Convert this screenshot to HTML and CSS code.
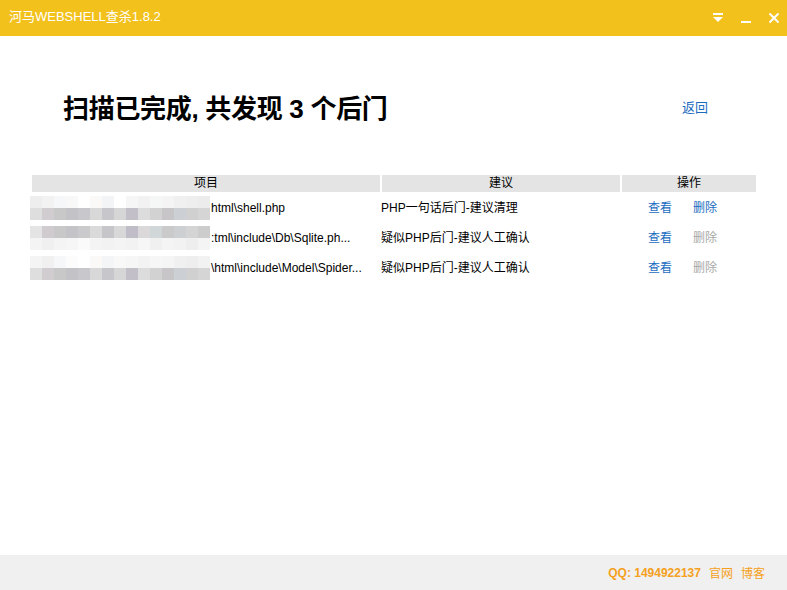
FILE: index.html
```html
<!DOCTYPE html>
<html lang="zh">
<head>
<meta charset="utf-8">
<title>河马WEBSHELL查杀1.8.2</title>
<link rel="stylesheet" href="styles.css">
</head>
<body>
<div class="app">
  <header class="titlebar">
    <span class="app-title">河马WEBSHELL查杀1.8.2</span>
    <div class="win-controls">
      <svg class="ctl" width="12" height="12" viewBox="0 0 12 12"><rect x="1" y="1" width="10" height="2" fill="#fff"/><polygon points="1,5 11,5 6,10" fill="#fff"/></svg>
      <svg class="ctl" width="12" height="12" viewBox="0 0 12 12"><rect x="1" y="9" width="10" height="2" fill="#fff"/></svg>
      <svg class="ctl" width="12" height="12" viewBox="0 0 12 12"><path d="M1.5 1.5 L10.5 10.5 M10.5 1.5 L1.5 10.5" stroke="#fff" stroke-width="2"/></svg>
    </div>
  </header>

  <main class="content">
    <div class="summary">
      <h1 class="headline">扫描已完成, 共发现 3 个后门</h1>
      <a class="back-link">返回</a>
    </div>

    <div class="result-table">
      <div class="thead">
        <div class="th col-item">项目</div>
        <div class="th col-advice">建议</div>
        <div class="th col-ops">操作</div>
      </div>

      <div class="tr">
        <div class="td col-item">
          <div class="mosaic">
            <i style="background:#eeeeee"></i><i style="background:#f2f2f2"></i><i style="background:#f6f7f8"></i><i style="background:#f8f8f8"></i><i style="background:#ffffff"></i><i style="background:#faf9f8"></i><i style="background:#f3f4f5"></i><i style="background:#ffffff"></i><i style="background:#f6f6f6"></i><i style="background:#f2f2f2"></i><i style="background:#f5f6f6"></i><i style="background:#f4f4f4"></i><i style="background:#f0f0f0"></i><i style="background:#eeeeee"></i><i style="background:#ececec"></i>
            <i style="background:#dedede"></i><i style="background:#d0ccd0"></i><i style="background:#c8c8c8"></i><i style="background:#c3c3c7"></i><i style="background:#c8c8cc"></i><i style="background:#d8d8d8"></i><i style="background:#c7c7cb"></i><i style="background:#d6d6d6"></i><i style="background:#c2bfc8"></i><i style="background:#dcdcdc"></i><i style="background:#d2d2d2"></i><i style="background:#c8c5c8"></i><i style="background:#ccd0d4"></i><i style="background:#d0d0d0"></i><i style="background:#d5d5d5"></i>
          </div>
          <span class="path">html\shell.php</span>
        </div>
        <div class="td col-advice">PHP一句话后门-建议清理</div>
        <div class="td col-ops"><a class="op">查看</a><a class="op">删除</a></div>
      </div>

      <div class="tr">
        <div class="td col-item">
          <div class="mosaic">
            <i style="background:#e4e4e4"></i><i style="background:#cfcbcf"></i><i style="background:#c8c8c8"></i><i style="background:#c4c4c8"></i><i style="background:#cacacd"></i><i style="background:#dadada"></i><i style="background:#c6c6ca"></i><i style="background:#d8d8d8"></i><i style="background:#c0bdc8"></i><i style="background:#dbd8da"></i><i style="background:#d1d6d8"></i><i style="background:#cacaca"></i><i style="background:#ccd0d3"></i><i style="background:#d4d4d4"></i><i style="background:#cccccc"></i>
            <i style="background:#f4f4f4"></i><i style="background:#f0f0f0"></i><i style="background:#f4f4f4"></i><i style="background:#f6f6f6"></i><i style="background:#fafafa"></i><i style="background:#f4f4f4"></i><i style="background:#f2f2f2"></i><i style="background:#f4f4f4"></i><i style="background:#f2f2f2"></i><i style="background:#f6f6f6"></i><i style="background:#f0f0f0"></i><i style="background:#f4f4f4"></i><i style="background:#f2f2f2"></i><i style="background:#eeeeee"></i><i style="background:#f4f4f4"></i>
          </div>
          <span class="path">:tml\include\Db\Sqlite.ph...</span>
        </div>
        <div class="td col-advice">疑似PHP后门-建议人工确认</div>
        <div class="td col-ops"><a class="op">查看</a><a class="op disabled">删除</a></div>
      </div>

      <div class="tr">
        <div class="td col-item">
          <div class="mosaic">
            <i style="background:#f4f4f4"></i><i style="background:#f0f0f0"></i><i style="background:#f6f7f8"></i><i style="background:#fcfcfc"></i><i style="background:#ffffff"></i><i style="background:#faf9f8"></i><i style="background:#f4f5f6"></i><i style="background:#f8f8f8"></i><i style="background:#f6f6f6"></i><i style="background:#f3f3f3"></i><i style="background:#f6f6f6"></i><i style="background:#f5f5f5"></i><i style="background:#f0f0f0"></i><i style="background:#eeeeee"></i><i style="background:#f2f2f2"></i>
            <i style="background:#dedede"></i><i style="background:#d0ccd0"></i><i style="background:#c8c8c8"></i><i style="background:#c3c3c7"></i><i style="background:#c8c8cc"></i><i style="background:#d8d8d8"></i><i style="background:#c7c7cb"></i><i style="background:#d6d6d6"></i><i style="background:#c2bfc8"></i><i style="background:#dcdcdc"></i><i style="background:#d2d2d2"></i><i style="background:#c8c5c8"></i><i style="background:#ccd0d4"></i><i style="background:#d0d0d0"></i><i style="background:#d5d5d5"></i>
          </div>
          <span class="path">\html\include\Model\Spider...</span>
        </div>
        <div class="td col-advice">疑似PHP后门-建议人工确认</div>
        <div class="td col-ops"><a class="op">查看</a><a class="op disabled">删除</a></div>
      </div>
    </div>
  </main>

  <footer class="statusbar">
    <span class="qq">QQ: 1494922137</span>
    <a class="foot-link">官网</a>
    <a class="foot-link">博客</a>
  </footer>
</div>
</body>
</html>
```

FILE: styles.css
```css
* { box-sizing: border-box; }
html, body {
  margin: 0;
  padding: 0;
  background: #fff;
}
body {
  font-family: "Liberation Sans", "Noto Sans CJK SC", sans-serif;
  color: #000;
}
.app {
  width: 787px;
  height: 590px;
  display: flex;
  flex-direction: column;
  overflow: hidden;
}
.titlebar {
  height: 36px;
  flex: none;
  background: #f2c11c;
  display: flex;
  align-items: center;
  justify-content: space-between;
  padding: 0 7px 0 9px;
}
.app-title {
  color: #fff;
  font-size: 13px;
  line-height: 16px;
  margin-top: -3px;
}
.win-controls {
  display: flex;
  gap: 16px;
  align-items: center;
}
.ctl { display: block; }

.content {
  flex: 1;
  display: flex;
  flex-direction: column;
}
.summary {
  display: flex;
  justify-content: space-between;
  align-items: flex-start;
  padding: 58px 79px 0 63px;
  height: 143px;
}
.headline {
  margin: 0;
  font-size: 26px;
  line-height: 30px;
  font-weight: bold;
  letter-spacing: -0.3px;
}
.back-link {
  color: #1a6cc0;
  font-size: 13px;
  line-height: 18px;
  margin-top: 5px;
}

.result-table {
  margin: -4px 0 0 32px;
  width: 724px;
  display: flex;
  flex-direction: column;
}
.thead {
  display: flex;
  gap: 2px;
  height: 17px;
  margin-bottom: 1px;
}
.th {
  background: #e4e4e4;
  font-size: 12px;
  line-height: 17px;
  text-align: center;
}
.col-item { width: 348px; }
.col-advice { width: 238px; }
.col-ops { width: 134px; }
.tr {
  display: flex;
  gap: 2px;
  height: 30px;
  align-items: center;
  font-size: 12px;
}
.td {
  line-height: 16px;
  white-space: nowrap;
}
.tr .col-item {
  display: flex;
  align-items: center;
  margin-left: -2px;
}
.mosaic {
  display: grid;
  grid-template-columns: repeat(15, 12px);
  grid-auto-rows: 12px;
  width: 180px;
  flex: none;
}
.mosaic i { display: block; }
.path {
  padding-left: 1px;
}
.tr .col-advice { padding-left: 1px; }
.tr .col-ops {
  display: flex;
  gap: 21px;
  padding-left: 28px;
}
.op {
  color: #1a6cc0;
}
.op.disabled {
  color: #a8a8a8;
}

.statusbar {
  height: 35px;
  flex: none;
  background: #f0f0f0;
  display: flex;
  align-items: center;
  justify-content: flex-end;
  gap: 8px;
  padding: 0 22px 0 0;
  font-size: 12px;
  color: #f5a020;
}
.qq { font-weight: bold; }
.foot-link { color: #f5a020; }
```
